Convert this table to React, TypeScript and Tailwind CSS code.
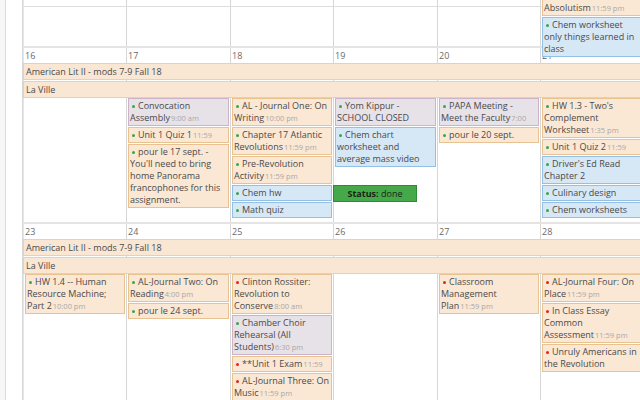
import type { ReactNode } from "react"

type Tone = "peach" | "lilac" | "blue"
type Ev = { t: string; time?: string; tone?: Tone; dot?: "g" | "r"; status?: boolean }

const toneCls: Record<Tone, string> = {
  peach: "bg-[#fae7d4] border-[#e9c292]",
  lilac: "bg-[#e7e1e8] border-[#cdb3c9]",
  blue: "bg-[#d6e7f6] border-[#94c0e6]",
}

const colStart = ["col-start-1", "col-start-2", "col-start-3", "col-start-4", "col-start-5", "col-start-6"]
const colLine = [
  "border-l border-[#e6e6e6]",
  "border-l border-[#d6d6d6]",
  "border-l border-[#d6d6d6]",
  "border-l border-[#d6d6d6]",
  "border-l border-[#d6d6d6]",
  "border-l border-[#d6d6d6]",
]
const gridCols = "grid grid-cols-[103px_104px_103px_104px_103px_104px]"

// "\n" in a title marks where the calendar breaks the line
function Event({ ev, className = "", pad = "pt-px", children }: { ev: Ev; className?: string; pad?: string; children?: ReactNode }) {
  const words = ev.t.split(" ")
  const last = words.pop()
  const head = words.join(" ")
  return (
    <div className={`relative mx-px border pl-px pb-px leading-[12px] whitespace-pre-line ${pad} ${toneCls[ev.tone ?? "peach"]} ${className}`}>
      {ev.dot && (
        <span
          className={`inline-block w-[3px] h-[3px] rounded-full ml-[2px] mr-[3px] align-middle ${
            ev.dot === "r" ? "bg-[#e3241b]" : "bg-[#35a64a]"
          }`}
        />
      )}
      {head && head + " "}
      <span className="whitespace-nowrap">
        {last}
        {ev.time && <span className="ml-px text-[7.5px] text-[#a9a9a9]">{ev.time}</span>}
      </span>
      {ev.status && (
        <div className="absolute z-10 left-[100px] top-[-1px] w-[84px] h-[17px] border border-[#2f8a35] bg-[#45a94a] text-center leading-[15px] text-[#162616] whitespace-nowrap">
          <b>Status:</b> done
        </div>
      )}
      {children}
    </div>
  )
}

function Bar({ label, row }: { label: string; row: string }) {
  return (
    <div className={`${row} col-start-1 col-span-6 h-[17px] border border-[#efcfa8] bg-[#f9e6d3] pl-[2px] leading-[15px]`}>
      {label}
    </div>
  )
}

function Week({ dates, cols, last }: { dates: string[]; cols: Ev[][]; last?: boolean }) {
  return (
    <div
      className={`${gridCols} grid-rows-[15px_18px_17px_1fr] border-t-2 border-[#e4e4e4] shrink-0 ${
        last ? "h-[180px]" : "h-[176px]"
      }`}
    >
      {colLine.map((c, i) => (
        <div key={"l" + i} className={`${colStart[i]} row-start-1 row-span-4 ${c}`} />
      ))}
      {dates.map((d, i) => (
        <div key={"d" + i} className={`${colStart[i]} row-start-1 pl-[2px] leading-[15px] text-[#6a6a6a]`}>
          {d}
        </div>
      ))}
      <Bar label="American Lit II - mods 7-9 Fall 18" row="row-start-2" />
      <Bar label="La Ville" row="row-start-3" />
      {cols.map((evs, i) => (
        <div key={"c" + i} className={`${colStart[i]} row-start-4 flex flex-col gap-px pl-px`}>
          {evs.map((ev, j) => (
            <Event key={j} ev={ev} />
          ))}
        </div>
      ))}
    </div>
  )
}

const week2: Ev[][] = [
  [],
  [
    { t: "Convocation Assembly", time: "9:00 am", tone: "lilac", dot: "g" },
    { t: "Unit 1 Quiz 1", time: "11:59", dot: "g" },
    { t: "pour le 17 sept. - You'll need to bring home Panorama francophones for this assignment.", dot: "g" },
  ],
  [
    { t: "AL - Journal One: On Writing", time: "10:00 pm", dot: "g" },
    { t: "Chapter 17 Atlantic Revolutions", time: "11:59 pm", dot: "g" },
    { t: "Pre-Revolution Activity", time: "11:59 pm", dot: "g" },
    { t: "Chem hw", tone: "blue", dot: "g", status: true },
    { t: "Math quiz", tone: "blue", dot: "g" },
  ],
  [
    { t: "Yom Kippur - SCHOOL CLOSED", tone: "lilac", dot: "g" },
    { t: "Chem chart worksheet and\naverage mass video", tone: "blue", dot: "g" },
  ],
  [
    { t: "PAPA Meeting -\nMeet the Faculty", time: "7:00", tone: "lilac", dot: "g" },
    { t: "pour le 20 sept.", dot: "g" },
  ],
  [
    { t: "HW 1.3 - Two's Complement Worksheet", time: "1:35 pm", dot: "g" },
    { t: "Unit 1 Quiz 2", time: "11:59", dot: "g" },
    { t: "Driver's Ed Read Chapter 2", tone: "blue", dot: "g" },
    { t: "Culinary design", tone: "blue", dot: "g" },
    { t: "Chem worksheets", tone: "blue", dot: "g" },
  ],
]

const week3: Ev[][] = [
  [{ t: "HW 1.4 -- Human Resource Machine; Part 2", time: "10:00 pm", dot: "g" }],
  [
    { t: "AL-Journal Two: On Reading", time: "4:00 pm", dot: "g" },
    { t: "pour le 24 sept.", dot: "g" },
  ],
  [
    { t: "Clinton Rossiter: Revolution to Conserve", time: "8:00 am", dot: "r" },
    { t: "Chamber Choir Rehearsal (All Students)", time: "6:30 pm", tone: "lilac", dot: "g" },
    { t: "**Unit 1 Exam", time: "11:59", dot: "r" },
    { t: "AL-Journal Three: On Music", time: "11:59 pm", dot: "r" },
  ],
  [],
  [{ t: "Classroom Management Plan", time: "11:59 pm", dot: "r" }],
  [
    { t: "AL-Journal Four: On Place", time: "11:59 pm", dot: "r" },
    { t: "In Class Essay Common Assessment", time: "11:59 pm", dot: "r" },
    { t: "Unruly Americans in the Revolution", dot: "r" },
  ],
]

export default function App() {
  return (
    <div className="w-[640px] h-[400px] overflow-hidden bg-white flex font-['Open_Sans',sans-serif] text-[9px] text-[#4a4a4a]">
      <div className="w-[6px] shrink-0 bg-[#f7f7f7] border-r border-[#dcdcdc]" />
      <div className="w-[16px] shrink-0" />
      <div className="w-[623px] shrink-0 flex flex-col border-l border-[#d8d8d8]">
        {/* week of the 9th, scrolled mostly out of view */}
        <div className={`${gridCols} grid-rows-[7px_1fr] h-[46px] shrink-0`}>
          {colLine.map((c, i) => (
            <div key={i} className={`${colStart[i]} row-start-1 row-span-2 ${c}`} />
          ))}
          <div className="row-start-1 col-start-1 col-span-6 border-b border-[#dedede]" />
          <div className="col-start-6 row-start-1 row-span-2 flex flex-col gap-px pl-px">
            <Event ev={{ t: "Absolutism", time: "11:59 pm" }} pad="pt-[13px]" className="-mt-[12px]" />
            <Event
              ev={{ t: "Chem worksheet only things learned in class", tone: "blue", dot: "g" }}
              className="z-10"
            />
          </div>
        </div>
        <Week dates={["16", "17", "18", "19", "20", "21"]} cols={week2} />
        <Week dates={["23", "24", "25", "26", "27", "28"]} cols={week3} last />
      </div>
    </div>
  )
}
